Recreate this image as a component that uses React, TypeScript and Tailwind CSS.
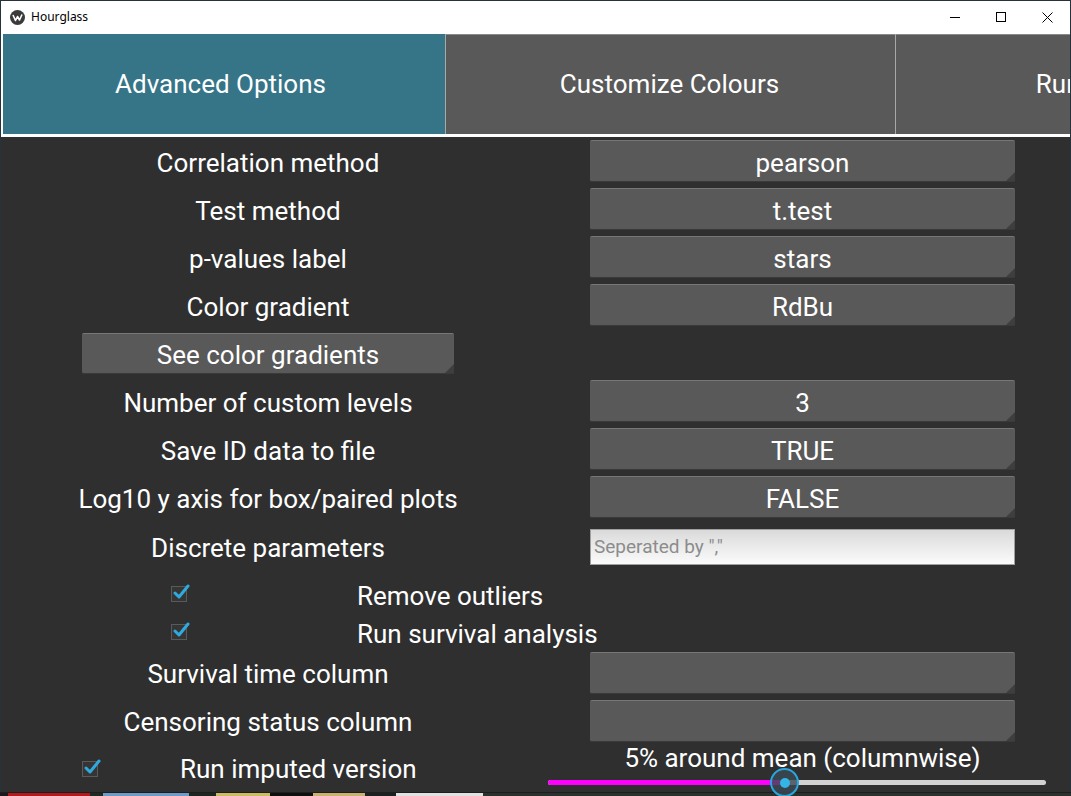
import React from 'react';

const rows1 = [
  { label: 'Correlation method', value: 'pearson' },
  { label: 'Test method', value: 't.test' },
  { label: 'p-values label', value: 'stars' },
  { label: 'Color gradient', value: 'RdBu' },
];

const rows2 = [
  { label: 'Number of custom levels', value: '3' },
  { label: 'Save ID data to file', value: 'TRUE' },
  { label: 'Log10 y axis for box/paired plots', value: 'FALSE' },
];

const desktop = [
  ['w-[8px]', 'bg-[#1a1a1a]'],
  ['w-[82px]', 'bg-[#b3191b]'],
  ['w-[13px]', 'bg-[#1f2b22]'],
  ['w-[86px]', 'bg-[#6d9bc9]'],
  ['w-[27px]', 'bg-[#1d261f]'],
  ['w-[54px]', 'bg-[#cbbb62]'],
  ['w-[43px]', 'bg-[#0f0f0f]'],
  ['w-[52px]', 'bg-[#c9b26f]'],
  ['w-[31px]', 'bg-[#1a2120]'],
  ['w-[87px]', 'bg-[#e2e2e2]'],
  ['flex-1', 'bg-[#2a322d]'],
];

const KivyButton = ({ text, className = '' }: { text?: string; className?: string }) => (
  <div
    className={`relative flex items-center justify-center bg-[#595959] rounded-[2px] border-t border-t-[#777] border-b border-b-[#3a3a3a] text-white text-[26px] leading-none ${className}`}
  >
    {text}
    <div className="absolute bottom-0 right-0 w-0 h-0 border-l-[9px] border-l-transparent border-b-[9px] border-b-[#3e3e3e]" />
  </div>
);

const Check = () => (
  <div className="relative w-[16px] h-[16px] border border-[#5a5a5a] bg-[#353535]">
    <svg className="absolute -top-[3px] left-[1px]" width="17" height="16" viewBox="0 0 17 16">
      <path d="M2 9 L6 13 L15 2" fill="none" stroke="#2fa9de" strokeWidth="3" strokeLinecap="round" strokeLinejoin="round" />
    </svg>
  </div>
);

const Row = ({ label, value, pad = 'pt-[3px]' }: { label: string; value: string; pad?: string }) => (
  <div className="flex h-[48px] items-center">
    <div className={`w-[534px] text-center text-white text-[26px] leading-none ${pad}`}>{label}</div>
    <div className="flex-1 flex justify-center">
      <KivyButton text={value} className="w-[425px] h-[42px] pt-[3px]" />
    </div>
  </div>
);

export default function App() {
  return (
    <div className="w-[1071px] h-[796px] overflow-hidden flex flex-col bg-[#1c1c1c]" style={{ fontFamily: 'Roboto, "Open Sans", sans-serif' }}>
      <div className="h-[792px] flex flex-col border-x border-t border-[#26333b] bg-[#2f2f2f]">
        {/* title bar */}
        <div className="h-[32px] bg-white flex items-center shrink-0">
          <div className="ml-[9px] w-[15px] h-[15px] rounded-full bg-[#3b3b3b] flex items-center justify-center">
            <svg width="11" height="9" viewBox="0 0 11 9">
              <path d="M1 2 L3.5 7.5 L5.5 3.5 L7.5 7 L10 1.5" fill="none" stroke="#fff" strokeWidth="1.6" strokeLinejoin="round" />
            </svg>
          </div>
          <span className="ml-[6px] text-[12px] text-black" style={{ fontFamily: '"Noto Sans", "Open Sans", sans-serif' }}>Hourglass</span>
          <div className="ml-auto flex items-center h-full">
            <div className="w-[46px] h-full flex items-center justify-center">
              <div className="w-[10px] h-px bg-black" />
            </div>
            <div className="w-[46px] h-full flex items-center justify-center">
              <div className="w-[10px] h-[10px] border border-black" />
            </div>
            <div className="w-[46px] h-full flex items-center justify-center">
              <svg width="11" height="11" viewBox="0 0 11 11">
                <path d="M0.5 0.5 L10.5 10.5 M10.5 0.5 L0.5 10.5" stroke="#000" strokeWidth="1" />
              </svg>
            </div>
          </div>
        </div>

        {/* tabs */}
        <div className="h-[104px] shrink-0 bg-white flex pl-[2px] pt-[1px] pb-[3px] overflow-hidden">
          <div className="w-[442px] shrink-0 bg-[#367587] flex items-center justify-center pr-[7px] text-white text-[26px]">
            Advanced Options
          </div>
          <div className="w-px shrink-0 bg-[#a8a8a8]" />
          <div className="w-[449px] shrink-0 bg-[#595959] border-t border-[#8a8a8a] flex items-center justify-center pr-[2px] text-white text-[26px]">
            Customize Colours
          </div>
          <div className="w-px shrink-0 bg-[#a8a8a8]" />
          <div className="w-[449px] shrink-0 bg-[#595959] border-t border-[#8a8a8a] flex items-center justify-center text-white text-[26px]">
            Run Hourglass
          </div>
        </div>

        {/* options */}
        <div className="flex flex-col">
          {rows1.map((r) => (
            <Row key={r.label} {...r} />
          ))}
          <div className="flex h-[48px] items-center">
            <div className="w-[534px] flex justify-center">
              <KivyButton text="See color gradients" className="w-[372px] h-[41px] pt-[3px]" />
            </div>
          </div>
          {rows2.map((r) => (
            <Row key={r.label} {...r} />
          ))}
          <div className="flex h-[48px] items-center">
            <div className="w-[534px] text-center text-white text-[26px] leading-none pt-[6px]">Discrete parameters</div>
            <div className="flex-1 flex justify-center pt-[4px]">
              <div className="w-[425px] h-[36px] border border-[#a0a0a0] bg-gradient-to-b from-[#dadada] to-[#fbfbfb] flex items-center pl-[3px] text-[19px] text-[#8c8c8c]">
                Seperated by ","
              </div>
            </div>
          </div>

          <div className="h-[80px] flex flex-col">
            <div className="h-[38px] mt-[6px] shrink-0 flex items-center">
              <div className="ml-[170px]"><Check /></div>
              <span className="ml-[170px] text-white text-[26px] leading-none pt-[3px]">Remove outliers</span>
            </div>
            <div className="h-[38px] shrink-0 flex items-center">
              <div className="ml-[170px]"><Check /></div>
              <span className="ml-[170px] text-white text-[26px] leading-none pt-[3px]">Run survival analysis</span>
            </div>
          </div>

          <Row label="Survival time column" value="" pad="pt-[1px]" />
          <Row label="Censoring status column" value="" pad="pt-[1px]" />

          <div className="flex h-[48px]">
            <div className="w-[534px] flex items-center">
              <div className="ml-[81px]"><Check /></div>
              <span className="ml-[82px] text-white text-[26px] leading-none">Run imputed version</span>
            </div>
            <div className="flex-1 flex flex-col">
              <div className="text-center text-white text-[26px] leading-none">5% around mean (columnwise)</div>
              <div className="relative mt-[9px] ml-[13px] mr-[24px] h-[5px] rounded-full bg-[#d2d2d2]">
                <div className="h-full w-[238px] rounded-full bg-[#ff00ff]" />
                <div className="absolute left-[222px] -top-[12px] w-[29px] h-[29px] rounded-full border-2 border-[#2aa6dc] bg-[#3b4a55]/80 flex items-center justify-center">
                  <div className="w-[10px] h-[10px] rounded-full bg-[#33b5e5]" />
                </div>
              </div>
            </div>
          </div>
        </div>
      </div>
      <div className="h-px bg-[#1e1e1e]" />
      <div className="flex-1 flex">
        {desktop.map(([w, c], i) => (
          <div key={i} className={`${w} ${c}`} />
        ))}
      </div>
    </div>
  );
}
